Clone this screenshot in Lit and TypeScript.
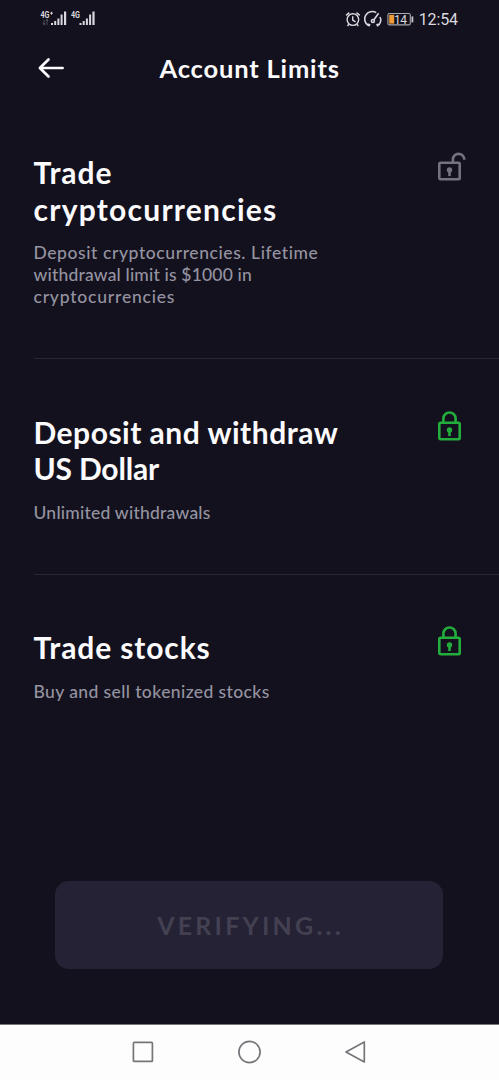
import { LitElement, html, css, svg } from "lit";
import { customElement, property } from "lit/decorators.js";

type Line = { text: string; spacing: number };
type Limit = { title: Line[]; note: Line[]; open: boolean };

const LIMITS: Limit[] = [
  {
    title: [{ text: "Trade", spacing: 0.95 }, { text: "cryptocurrencies", spacing: 1.24 }],
    note: [
      { text: "Deposit cryptocurrencies. Lifetime", spacing: 0.58 },
      { text: "withdrawal limit is $1000 in", spacing: 0.18 },
      { text: "cryptocurrencies", spacing: 0.79 },
    ],
    open: true,
  },
  {
    title: [{ text: "Deposit and withdraw", spacing: 0.49 }, { text: "US Dollar", spacing: -0.2 }],
    note: [{ text: "Unlimited withdrawals", spacing: 0.23 }],
    open: false,
  },
  {
    title: [{ text: "Trade stocks", spacing: 0.87 }],
    note: [{ text: "Buy and sell tokenized stocks", spacing: 0.4 }],
    open: false,
  },
];

@customElement("lock-icon")
class LockIcon extends LitElement {
  @property({ type: Boolean }) open = false;
  static styles = css`
    :host { display: block; width: 30px; height: 32px; color: #22ad3c; }
    :host([open]) { color: #74727e; }
    svg { display: block; }
  `;
  render() {
    return html`<svg width="30" height="32" viewBox="0 0 30 32" fill="none" stroke="currentColor" stroke-width="2.6">
      <rect x="2.3" y="11.8" width="20.4" height="16.4" rx="1.2" />
      ${this.open
        ? svg`<path d="M15.9 11.6V8.2a5.7 5.7 0 0 1 11.3-.6v1.2" />`
        : svg`<path d="M6.4 11.6V7.6a6.1 6.1 0 0 1 12.2 0v4" />`}
      <circle cx="12.5" cy="18.9" r="2.7" fill="currentColor" stroke="none" />
      <path d="M12.5 19.5v5.6" stroke-width="2.6" />
    </svg>`;
  }
}

@customElement("app-root")
class AppRoot extends LitElement {
  static styles = css`
    :host {
      display: flex; flex-direction: column; height: 1080px; width: 499px; overflow: hidden;
      background: #13111d; color: #fbfafc; font-family: Lato, "Open Sans", sans-serif;
    }
    * { box-sizing: border-box; }
    svg { display: block; flex: none; }
    .status { display: flex; align-items: center; height: 38px; padding: 0 41px 0 40px; flex: none; justify-content: space-between; color: #d9d8de; }
    .right { display: flex; align-items: center; }
    .gauge { margin-left: 3px; }
    .battery { margin-left: 5px; }
    .clock { font: 400 16px/20px Roboto, sans-serif; margin: 1px 0 0 5px; letter-spacing: -.1px; }
    .top { display: grid; grid-template-columns: 60px 1fr 60px; align-items: center; height: 60px; padding: 0 0 0 37px; flex: none; }
    .name { margin: 0; font-size: 25.5px; line-height: 30px; font-weight: 700; white-space: nowrap; padding-left: 62.5px; letter-spacing: .83px; }
    .list { flex: 1; padding: 56px 0 0 33.5px; }
    .item { display: flex; justify-content: space-between; border-bottom: 1px solid #292733; margin-bottom: 54.7px; padding: 0 32px 50px 0; }
    .item:last-child { border: 0; }
    .title { margin: 0 0 15px; font-size: 30px; line-height: 36.5px; font-weight: 700; }
    .note { margin: 0; font-size: 17.5px; line-height: 22px; color: #9593a1; font-weight: 500; }
    .line { display: block; white-space: nowrap; }
    .icon { margin-top: -3px; }
    .action { flex: none; margin: 0 56px 55px 55px; height: 88px; border: 0; border-radius: 14px; background: #252235; color: #434051; font: 700 25px/30px Lato, sans-serif; letter-spacing: 3.2px; padding: 0 0 0 3px; }
    .nav { flex: none; height: 56px; background: #fdfdfd; border-top: 1px solid #77757c; display: flex; padding: 0 0 2px 130px; align-items: center; gap: 80px; }
  `;

  lines(lines: Line[]) {
    return lines.map((l) => html`<span class="line" style="letter-spacing:${l.spacing}px">${l.text}</span>`);
  }

  render() {
    return html`
      <div class="status">
        <svg width="56" height="20" viewBox="0 0 56 20" fill="#d9d8de" font-family="Roboto" font-weight="700" font-size="9">
          <text x="0.5" y="9" textLength="9" lengthAdjust="spacingAndGlyphs">4G</text>
          <path d="M10 4.2h3M11.5 2.7v3" stroke="#d9d8de" stroke-width=".9" />
          <path d="M4 11v4M3 14l1 2 1-2M7 16v-5M6 12l1-2 1 2" stroke="#5d5b66" stroke-width=".8" fill="none" />
          <path d="M11 14h2v2h-2zM14.2 12h2v4h-2zM17.4 9.5h2V16h-2zM20.6 5.5h2V16h-2zM24 2.5h2.2V16H24z" />
          <text x="31" y="9" textLength="9" lengthAdjust="spacingAndGlyphs">4G</text>
          <path d="M39.5 14h2v2h-2zM42.7 12h2v4h-2zM45.9 9.5h2V16h-2zM49.1 5.5h2V16h-2zM52.4 2.5h2.2V16h-2.2z" />
        </svg>
        <div class="right">
          <svg width="16" height="18" viewBox="0 0 16 18" fill="none" stroke="#d9d8de" stroke-width="1.4">
            <circle cx="7.9" cy="9.6" r="5.8" />
            <path d="M7.7 6.2V10l2.8 1.8M1.1 5.4l3.2-2.8M14.7 5.4l-3.2-2.8M3.9 14.2 2.5 16M11.9 14.2l1.4 1.8" />
          </svg>
          <svg class="gauge" width="18" height="18" viewBox="0 0 18 18" fill="none" stroke="#d9d8de" stroke-width="1.6">
            <path d="M4.4 15.6A7.3 7.3 0 0 1 12.2 2.6M16 7a7.3 7.3 0 0 1-1.7 8.4M2.8 14.1l2.7.5-.5 1.8M15.9 14.1l-2.7.5.5 1.8" />
            <circle cx="8.9" cy="11" r="1.5" /><path d="M9.9 9.7 14.6 3.2" />
          </svg>
          <svg class="battery" width="27" height="14" viewBox="0 0 27 14" fill="none">
            <rect x=".9" y="1.5" width="22.4" height="11.4" rx="1.5" stroke="#aaa7ae" stroke-width="1.1" />
            <path d="M2.2 2.8h5v8.8h-5z" fill="#f09a36" />
            <path d="M25.4 4.4v6" stroke="#c8c6cc" stroke-width="1.8" />
            <text x="7" y="11.5" fill="#d9d8de" font-family="Roboto" font-size="12" textLength="13">14</text>
          </svg>
          <span class="clock">12:54</span>
        </div>
      </div>
      <header class="top">
        <svg width="28" height="24" viewBox="0 0 28 24" fill="none" stroke="#fbfafc" stroke-width="2.7" stroke-linecap="round" stroke-linejoin="round">
          <path d="M25.6 12H3M11.5 3.5 2.9 12l8.6 8.5" />
        </svg>
        <h1 class="name">Account Limits</h1>
      </header>
      <main class="list">
        ${LIMITS.map(
          (l) => html`<section class="item">
            <div>
              <h2 class="title">${this.lines(l.title)}</h2>
              <p class="note">${this.lines(l.note)}</p>
            </div>
            <lock-icon class="icon" ?open=${l.open}></lock-icon>
          </section>`
        )}
      </main>
      <button class="action" disabled>VERIFYING...</button>
      <nav class="nav">
        <svg width="26" height="26" viewBox="0 0 26 26" fill="none" stroke="#77757a" stroke-width="1.7"><rect x="3.4" y="3.4" width="19" height="19" rx="1" /></svg>
        <svg width="26" height="26" viewBox="0 0 26 26" fill="none" stroke="#77757a" stroke-width="1.7"><circle cx="13.5" cy="13" r="10.6" /></svg>
        <svg width="26" height="26" viewBox="0 0 26 26" fill="none" stroke="#77757a" stroke-width="1.7" stroke-linejoin="round"><path d="M22.3 3v20L4 13z" /></svg>
      </nav>`;
  }
}
